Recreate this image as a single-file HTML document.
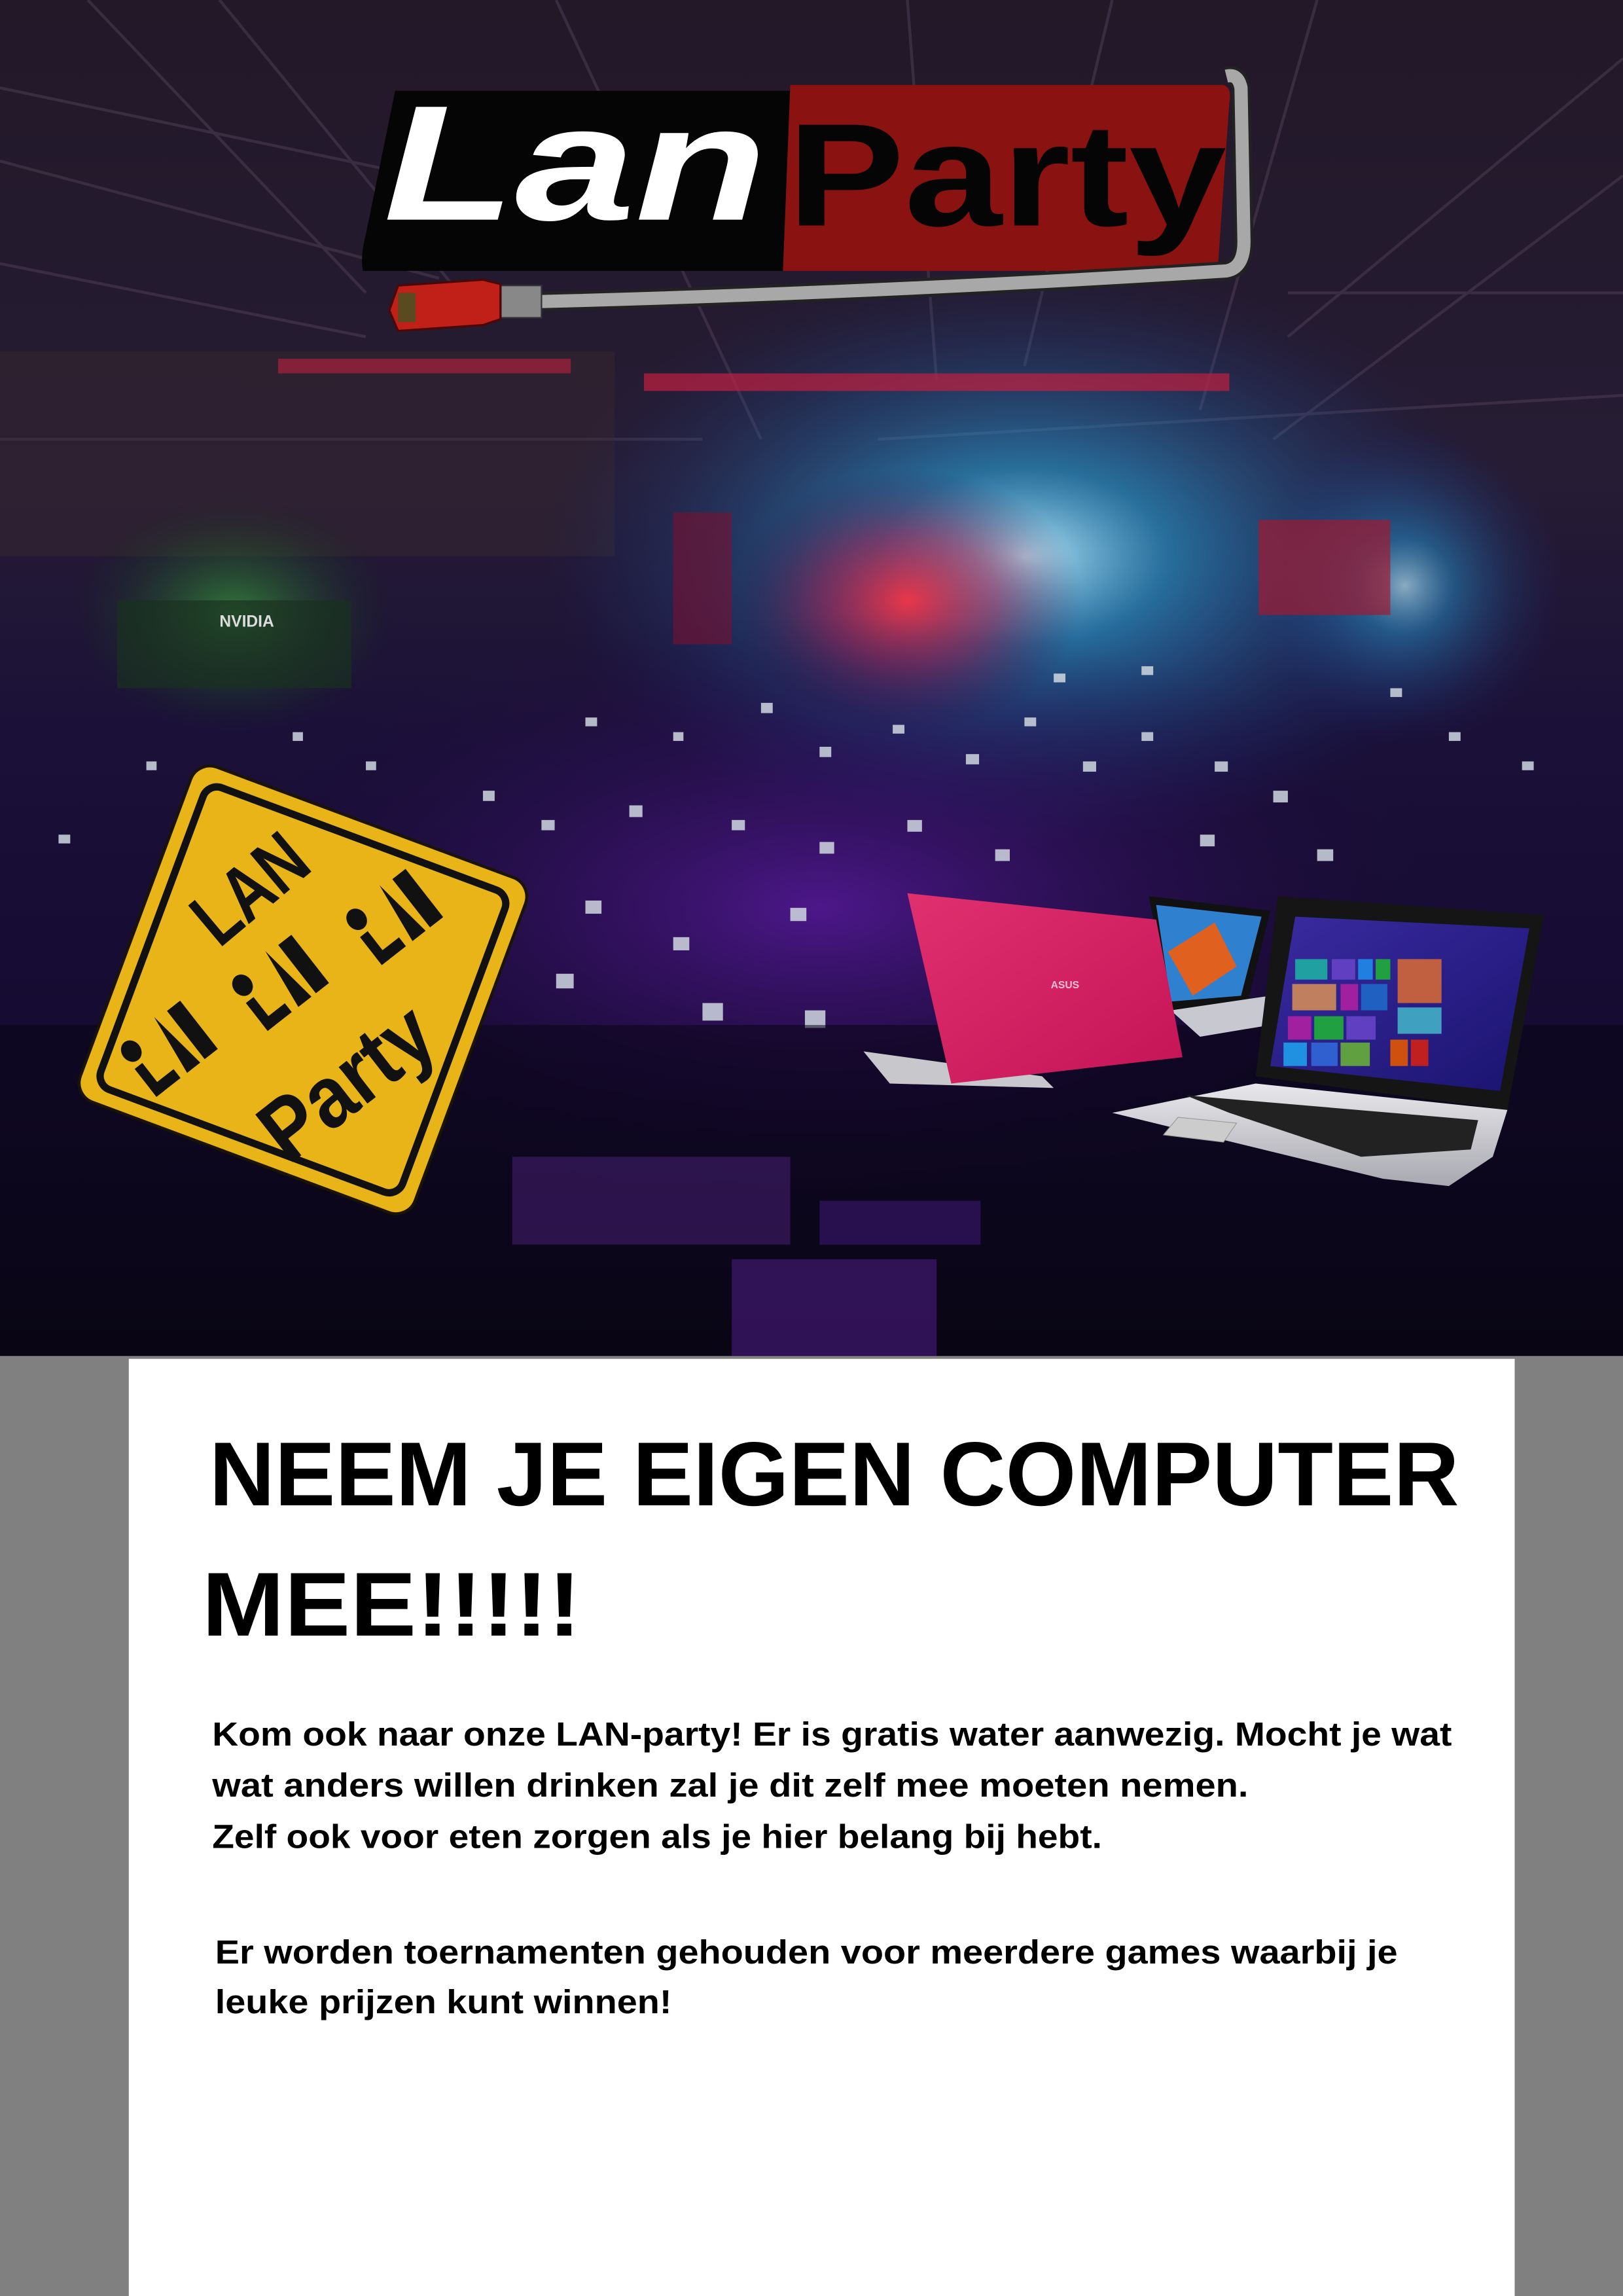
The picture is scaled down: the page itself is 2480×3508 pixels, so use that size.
<!DOCTYPE html>
<html><head><meta charset="utf-8"><style>
html,body{margin:0;padding:0;background:#808080;}
svg{display:block;}
</style></head><body>
<svg width="2480" height="3508" viewBox="0 0 1109 1568" preserveAspectRatio="none" xmlns="http://www.w3.org/2000/svg">
<defs>
<radialGradient id="blue" cx="0.5" cy="0.5" r="0.5"><stop offset="0" stop-color="#bfefff" stop-opacity="0.95"/><stop offset="0.3" stop-color="#2aa6e0" stop-opacity="0.6"/><stop offset="1" stop-color="#1a2a80" stop-opacity="0"/></radialGradient>
<radialGradient id="red" cx="0.5" cy="0.5" r="0.5"><stop offset="0" stop-color="#ff3040" stop-opacity="0.9"/><stop offset="0.5" stop-color="#b01040" stop-opacity="0.5"/><stop offset="1" stop-color="#400030" stop-opacity="0"/></radialGradient>
<radialGradient id="purp" cx="0.5" cy="0.5" r="0.5"><stop offset="0" stop-color="#5a1aa0" stop-opacity="0.8"/><stop offset="1" stop-color="#200840" stop-opacity="0"/></radialGradient>
<radialGradient id="green" cx="0.5" cy="0.5" r="0.5"><stop offset="0" stop-color="#40c040" stop-opacity="0.6"/><stop offset="1" stop-color="#104010" stop-opacity="0"/></radialGradient>
<linearGradient id="bg" x1="0" y1="0" x2="0" y2="1"><stop offset="0" stop-color="#221828"/><stop offset="0.35" stop-color="#261c34"/><stop offset="0.55" stop-color="#1a1038"/><stop offset="0.8" stop-color="#150a30"/><stop offset="1" stop-color="#0a0614"/></linearGradient>
<linearGradient id="pink" x1="0" y1="0" x2="1" y2="1"><stop offset="0" stop-color="#e0306e"/><stop offset="1" stop-color="#c41456"/></linearGradient>
<linearGradient id="silver" x1="0" y1="0" x2="0" y2="1"><stop offset="0" stop-color="#e8e8ec"/><stop offset="1" stop-color="#a8a8b0"/></linearGradient>
<linearGradient id="scr" x1="0" y1="0" x2="1" y2="1"><stop offset="0" stop-color="#3a2aa0"/><stop offset="1" stop-color="#1a1470"/></linearGradient>
<g id="ico"><circle cx="6" cy="-10" r="7"/><rect x="0" y="0" width="7" height="22"/><rect x="0" y="15" width="22" height="7"/><polygon points="28,22 34,-18 40,22"/><rect x="44" y="-16" width="12" height="38"/></g>
</defs>
<rect x="0" y="0" width="1109" height="1568" fill="#808080"/>
<rect x="88" y="928" width="947" height="640" fill="#ffffff"/>
<rect x="0" y="0" width="1109" height="926" fill="url(#bg)"/>
<g stroke="#4a3a50" stroke-width="2" opacity="0.6" fill="none">
<path d="M0 60 L380 140 M0 110 L300 190 M380 0 L520 300 M620 0 L640 260 M760 0 L700 250 M900 0 L820 280 M1109 40 L880 230 M1109 120 L870 300 M0 180 L250 230 M150 0 L330 220 M60 0 L250 200"/>
<path d="M0 300 L480 300 M600 300 L1109 270 M880 200 L1109 200"/>
</g>
<rect x="0" y="240" width="420" height="140" fill="#3a2a30" opacity="0.4"/>
<ellipse cx="700" cy="380" rx="330" ry="200" fill="url(#blue)"/>
<ellipse cx="620" cy="410" rx="120" ry="90" fill="url(#red)"/>
<ellipse cx="960" cy="400" rx="110" ry="110" fill="url(#blue)" opacity="0.7"/>
<ellipse cx="560" cy="620" rx="420" ry="200" fill="url(#purp)"/>
<ellipse cx="160" cy="420" rx="110" ry="80" fill="url(#green)"/>
<rect x="440" y="255" width="400" height="12" fill="#c02040" opacity="0.7"/>
<rect x="190" y="245" width="200" height="10" fill="#c02040" opacity="0.6"/>
<rect x="860" y="355" width="90" height="65" fill="#a01a30" opacity="0.7"/>
<rect x="460" y="350" width="40" height="90" fill="#7a1030" opacity="0.6"/>
<rect x="80" y="410" width="160" height="60" fill="#1a3020" opacity="0.7"/>
<text x="150" y="428" font-family="Liberation Sans, sans-serif" font-size="11" font-weight="bold" fill="#ddd">NVIDIA</text>
<g fill="#d0d8e0" opacity="0.85">
<rect x="400" y="490" width="8" height="6"/><rect x="460" y="500" width="7" height="6"/><rect x="520" y="480" width="8" height="7"/><rect x="560" y="510" width="8" height="7"/><rect x="610" y="495" width="8" height="6"/><rect x="660" y="515" width="9" height="7"/><rect x="700" y="490" width="8" height="6"/><rect x="740" y="520" width="9" height="7"/><rect x="780" y="500" width="8" height="6"/><rect x="830" y="520" width="9" height="7"/><rect x="870" y="540" width="10" height="8"/><rect x="900" y="580" width="11" height="8"/><rect x="330" y="540" width="8" height="7"/><rect x="370" y="560" width="9" height="7"/><rect x="430" y="550" width="9" height="8"/><rect x="500" y="560" width="9" height="7"/><rect x="560" y="575" width="10" height="8"/><rect x="620" y="560" width="10" height="8"/><rect x="680" y="580" width="10" height="8"/><rect x="820" y="570" width="10" height="8"/><rect x="300" y="600" width="10" height="8"/><rect x="400" y="615" width="11" height="9"/><rect x="460" y="640" width="11" height="9"/><rect x="540" y="620" width="11" height="9"/><rect x="380" y="665" width="12" height="10"/><rect x="480" y="685" width="14" height="12"/><rect x="550" y="690" width="14" height="12"/><rect x="40" y="570" width="8" height="6"/><rect x="100" y="520" width="7" height="6"/><rect x="200" y="500" width="7" height="6"/><rect x="250" y="520" width="7" height="6"/><rect x="950" y="470" width="8" height="6"/><rect x="990" y="500" width="8" height="6"/><rect x="1040" y="520" width="8" height="6"/><rect x="720" y="460" width="8" height="6"/><rect x="780" y="455" width="8" height="6"/></g>
<rect x="0" y="700" width="1109" height="226" fill="#0a0616" opacity="0.55"/>
<rect x="350" y="790" width="190" height="60" fill="#3a1a60" opacity="0.7"/>
<rect x="500" y="860" width="140" height="66" fill="#4a1a80" opacity="0.6"/>
<rect x="560" y="820" width="110" height="30" fill="#3a1870" opacity="0.6"/>
<polygon points="785,612 868,622 852,686 800,690" fill="#111"/>
<polygon points="790,618 862,626 848,680 800,684" fill="#3080d0"/>
<polygon points="798,650 830,630 845,660 815,680" fill="#e06020"/>
<polygon points="800,690 868,680 868,700 820,708" fill="#c8c8d0"/>
<polygon points="590,718 712,735 720,743 608,740" fill="#c8c8cc"/>
<polygon points="620,610 790,628 808,722 650,740" fill="url(#pink)"/>
<text x="718" y="675" font-family="Liberation Sans, sans-serif" font-size="7" font-weight="bold" fill="#f0c0d0">ASUS</text>
<polygon points="873,612 1055,625 1030,758 858,735" fill="#151515"/>
<polygon points="885,626 1045,634 1025,745 868,728" fill="url(#scr)"/>
<g>
<rect x="885" y="655" width="22" height="14" fill="#20a0a0"/><rect x="910" y="655" width="16" height="14" fill="#6040c0"/><rect x="928" y="655" width="10" height="14" fill="#2080e0"/><rect x="940" y="655" width="10" height="14" fill="#20a040"/><rect x="955" y="655" width="30" height="30" fill="#c06040"/>
<rect x="883" y="672" width="30" height="18" fill="#c08060"/><rect x="916" y="672" width="12" height="18" fill="#a020a0"/><rect x="930" y="672" width="18" height="18" fill="#2060c0"/><rect x="955" y="688" width="30" height="18" fill="#40a0c0"/>
<rect x="880" y="694" width="16" height="16" fill="#a020a0"/><rect x="898" y="694" width="20" height="16" fill="#20a040"/><rect x="920" y="694" width="20" height="16" fill="#6040c0"/><rect x="950" y="710" width="12" height="18" fill="#d05010"/><rect x="964" y="710" width="12" height="18" fill="#c02020"/>
<rect x="877" y="712" width="16" height="16" fill="#2090e0"/><rect x="896" y="712" width="18" height="16" fill="#3060d0"/><rect x="916" y="712" width="20" height="16" fill="#60a040"/>
</g>
<polygon points="858,740 1030,758 1020,790 990,810 945,805 760,760" fill="url(#silver)"/>
<polygon points="810,748 1010,765 1005,785 930,790 840,760" fill="#222"/>
<polygon points="805,763 845,767 836,780 795,775" fill="#ccc" stroke="#999" stroke-width="0.5"/>
<g transform="translate(207,676) rotate(20.4)">
<rect x="-122" y="-122" width="244" height="244" rx="14" fill="#e8b418" stroke="#1a1400" stroke-width="2"/>
<rect x="-110" y="-110" width="220" height="220" rx="10" fill="none" stroke="#111" stroke-width="5"/>
</g>
<g font-family="Liberation Sans, sans-serif" font-weight="bold" fill="#111">
<text transform="translate(170,606) rotate(-40) scale(0.85,1.2)" x="-50" y="16" font-size="44" textLength="100" lengthAdjust="spacingAndGlyphs">LAN</text>
<text transform="translate(236,738) rotate(-38) scale(0.85,1.2)" x="-78" y="18" font-size="50" textLength="156" lengthAdjust="spacingAndGlyphs">Party</text>
<use href="#ico" transform="translate(92,730) rotate(-38) scale(0.95,1.1)"/>
<use href="#ico" transform="translate(168,685) rotate(-38) scale(0.95,1.1)"/>
<use href="#ico" transform="translate(246,640) rotate(-38) scale(0.95,1.1)"/>
</g>
<path d="M270 62 L540 62 L535 185 L248 185 Q246 175 250 160 Z" fill="#050505"/>
<path d="M540 58 L836 58 Q842 60 840 70 L832 185 L535 185 Z" fill="#8a1210"/>
<text x="262" y="150" font-family="Liberation Sans, sans-serif" font-weight="bold" font-style="italic" font-size="112" fill="#ffffff" textLength="262" lengthAdjust="spacingAndGlyphs">Lan</text>
<text x="538" y="154" font-family="Liberation Sans, sans-serif" font-weight="bold" font-size="100" fill="#050505" textLength="300" lengthAdjust="spacingAndGlyphs">Party</text>
<path d="M368 206 Q600 200 838 185 Q850 183 850 165 L848 60 Q846 50 838 52" fill="none" stroke="#222" stroke-width="13"/>
<path d="M368 206 Q600 200 838 185 Q850 183 850 165 L848 60 Q846 50 838 52" fill="none" stroke="#a8a8a8" stroke-width="9"/>
<rect x="342" y="195" width="28" height="22" fill="#888" stroke="#333" stroke-width="1"/>
<polygon points="272,195 330,191 342,194 342,218 330,222 272,226 266,212" fill="#c02018" stroke="#4a0808" stroke-width="1.5"/>
<rect x="272" y="200" width="12" height="20" fill="#5a4a20"/>
<g font-family="Liberation Sans, sans-serif" font-weight="bold" fill="#000">
<text x="143" y="1028" font-size="62" textLength="854" lengthAdjust="spacingAndGlyphs">NEEM JE EIGEN COMPUTER</text>
<text x="138" y="1117" font-size="62" textLength="259" lengthAdjust="spacingAndGlyphs">MEE!!!!!</text>
<g font-size="23">
<text x="145" y="1192" textLength="847" lengthAdjust="spacingAndGlyphs">Kom ook naar onze LAN-party! Er is gratis water aanwezig. Mocht je wat</text>
<text x="145" y="1227" textLength="708" lengthAdjust="spacingAndGlyphs">wat anders willen drinken zal je dit zelf mee moeten nemen.</text>
<text x="145" y="1262" textLength="608" lengthAdjust="spacingAndGlyphs">Zelf ook voor eten zorgen als je hier belang bij hebt.</text>
<text x="147" y="1341" textLength="808" lengthAdjust="spacingAndGlyphs">Er worden toernamenten gehouden voor meerdere games waarbij je</text>
<text x="147" y="1375" textLength="312" lengthAdjust="spacingAndGlyphs">leuke prijzen kunt winnen!</text>
</g>
</g>
</svg>
</body></html>
